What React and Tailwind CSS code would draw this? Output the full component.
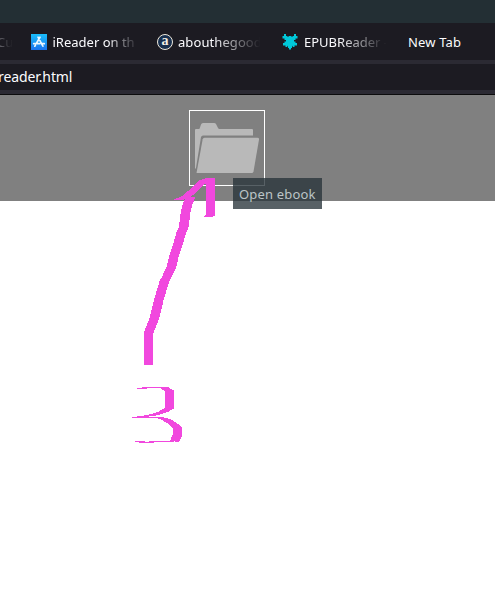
const fade =
  "whitespace-nowrap pt-[2px] [mask-image:linear-gradient(to_right,black_0%,black_40%,transparent_96%)]";

// A flat marker nib: wide horizontally, hair-thin vertically.
const NIB_W = 9;
const NIB_H = 1;

const arrowShaft = [
  [148.5, 364.5], [148.5, 333], [154.5, 318], [159, 299], [164.5, 281], [166.7, 277], [171.5, 267],
  [174, 256], [177.7, 245], [181.5, 232], [183.5, 228], [185.7, 212], [188, 203], [190.5, 197.5],
];
const arrowHead = [
  [179, 199.5], [187, 196], [193, 191], [199, 185], [204, 180.5], [210.5, 178.5], [210.5, 215], [208.5, 216.5],
];
const mark = [
  [141.5, 388.5], [148, 387.5], [164, 387.5], [169.5, 391], [169.5, 408], [163, 412],
  [151, 415.5], [143, 416.5], [136.5, 417.5], [159, 417.5], [165, 419], [172, 423],
  [177.5, 428], [177.5, 435], [174.5, 441.5], [143, 442.2], [139.5, 441.5],
];

function NibStroke({ points }) {
  return (
    <polyline
      points={points.map(([x, y]) => `${x / NIB_W},${y / NIB_H}`).join(" ")}
      transform={`scale(${NIB_W} ${NIB_H})`}
      fill="none"
      stroke="#f148de"
      strokeWidth="1.08"
      strokeLinejoin="round"
      strokeLinecap="round"
    />
  );
}

function StoreIcon() {
  return (
    <svg className="size-4 shrink-0" viewBox="0 0 16 16">
      <defs>
        <linearGradient id="store" x1="0" y1="0" x2="0" y2="1">
          <stop offset="0" stopColor="#19befa" />
          <stop offset="1" stopColor="#1a73ee" />
        </linearGradient>
      </defs>
      <rect width="16" height="16" fill="url(#store)" />
      <g fill="none" stroke="#eaf6ff" strokeWidth="1.7" strokeLinecap="round">
        <path d="M7 3.2 11.9 12.2M9 3.2 5.3 9.5M4.4 11.3 3.8 12.2M2.7 9.7H8.7M11.2 9.7H13.3" />
      </g>
    </svg>
  );
}

function AboutIcon() {
  return (
    <span className="flex size-4 shrink-0 items-center justify-center rounded-full border-[1.5px] border-[#eee9dc] bg-[#18304f] font-['Liberation_Serif',serif] text-[14px] leading-none font-bold text-[#f2eee3]">
      <span className="relative -top-px">a</span>
    </span>
  );
}

function EpubIcon() {
  return (
    <svg className="size-4 shrink-0" viewBox="0 0 16 16" fill="#00c8d9">
      <path d="M2 0H4V2H5.500V3H6.500V2H9.500V3H10.500V2H12V0H14V2H15.500V4.500H13.500V6H12V7.500H13.500V9H15V11.500H12.500V13H11V11H10V14H9V15H8.500V16H7.500V15H7V14H6V11H5V13H3.500V11.500H1V9H2.500V7.500H4V6H2.500V4.500H.5V2H2Z" />
      <path d="M4 5H12V10L10 13H6L4 10Z" />
    </svg>
  );
}

function FolderIcon() {
  return (
    <svg className="h-[50px] w-[65px]" viewBox="0 0 65 50" fill="#b9b9b9">
      <path d="M0 7Q0 6 1 6H4Q4.500 6 5 4.500L6 1.500Q6.500 0 8 0H19Q20.500 0 21 1L23 5Q23.500 6 24.500 6H57Q58 6 58 7V12.500H8Q6.500 12.500 6 14L.8 46L0 45Z" />
      <path d="M9.500 14.700H62.500Q64.300 14.700 64 16.500L58.500 48.500Q58.200 50 56.500 50H1.500L7.700 16.300Q8 14.700 9.500 14.700Z" />
    </svg>
  );
}

export default function App() {
  return (
    <div className="relative flex h-[615px] w-[495px] flex-col overflow-hidden bg-white font-['Noto_Sans',sans-serif] text-[#fbfbfe]">
      <div className="h-[23px] bg-[#232f34]" />
      <nav className="flex h-[37px] items-center bg-[#1c1b22] text-[13px]">
        <div className="w-[31px] shrink-0 pt-[2px] whitespace-nowrap">
          <span className="-ml-[3px] bg-linear-to-r from-[#77767c] to-[#1c1b22] bg-clip-text text-transparent">Cu</span>
        </div>
        <div className="flex w-[126px] shrink-0 items-center gap-[5.5px]">
          <StoreIcon />
          <span className="w-[84px] pt-[2px] whitespace-nowrap [mask-image:linear-gradient(to_right,black_0_55px,#0008_67px,transparent_86px)]">iReader on th</span>
        </div>
        <div className="flex w-[125px] shrink-0 items-center gap-[5px]">
          <AboutIcon />
          <span className={`w-[86px] tracking-[0.08px] ${fade}`}>abouthegood</span>
        </div>
        <div className="flex w-[126px] shrink-0 items-center gap-[6px]">
          <EpubIcon />
          <span className={`w-[86px] ${fade}`}>EPUBReader -</span>
        </div>
        <span className="pt-[2px] tracking-[0.15px] whitespace-nowrap">New Tab</span>
      </nav>
      <div className="flex h-[34px] items-center border-y-4 border-[#2b2a33] bg-[#1c1b22] pb-[2px] text-[14px]">
        <span className="-ml-[2px] tracking-[-0.1px]">reader.html</span>
      </div>
      <div className="h-px bg-[#0c0c0d]" />
      <main className="h-[106px] bg-[#808080] pt-[15px] pl-[189px]">
        <button className="flex h-[76px] w-[76px] items-start border border-white pt-3 pl-[5px]">
          <FolderIcon />
        </button>
      </main>
      <svg className="absolute inset-0 h-full w-full" viewBox="0 0 495 615" shapeRendering="crispEdges">
        <NibStroke points={arrowShaft} />
        <NibStroke points={arrowHead} />
        <NibStroke points={mark} />
      </svg>
      <div className="absolute top-[178px] left-[233px] flex h-[31px] w-[89px] items-center bg-[#263238]/77 pt-[2px] pl-[6px] text-[13px] tracking-[0.18px] whitespace-nowrap text-[#bcc4c6]">
        Open ebook
      </div>
    </div>
  );
}
